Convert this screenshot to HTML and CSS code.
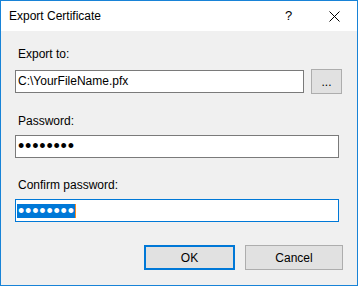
FILE: index.html
```html
<!DOCTYPE html>
<html lang="en">
<head>
  <meta charset="UTF-8" />
  <title>Export Certificate</title>
  <link rel="stylesheet" href="styles.css">
</head>
<body>
  <div class="dialog">
    <div class="titlebar">
      <span class="title">Export Certificate</span>
      <span class="help">?</span>
      <span class="close">
        <svg width="11" height="11" viewBox="0 0 11 11"><path d="M0.5 0.5 L10.5 10.5 M10.5 0.5 L0.5 10.5" stroke="#000" stroke-width="1" fill="none"/></svg>
      </span>
    </div>

    <div class="content">
      <div class="label label-first">Export to:</div>
      <div class="row">
        <div class="field field-path">C:\YourFileName.pfx</div>
        <button class="btn btn-browse">...</button>
      </div>

      <div class="label">Password:</div>
      <div class="field field-wide"><span class="dots">••••••••</span></div>

      <div class="label">Confirm password:</div>
      <div class="field field-wide field-focus"><span class="dots selected">••••••••</span><span class="caret"></span></div>

      <div class="actions">
        <button class="btn btn-ok">OK</button>
        <button class="btn btn-cancel">Cancel</button>
      </div>
    </div>
  </div>
</body>
</html>
```

FILE: styles.css
```css
* { box-sizing: border-box; margin: 0; padding: 0; }
body { font-family: 'Liberation Sans', Arial, sans-serif; font-size: 12px; color: #000; background: #f0f0f0; }

.dialog {
  width: 358px;
  height: 286px;
  border: 1px solid #1883d7;
  background: #f0f0f0;
  display: flex;
  flex-direction: column;
}

.titlebar {
  height: 30px;
  background: #fff;
  display: flex;
  align-items: center;
  padding-left: 8px;
}
.title { flex: 1; line-height: 30px; }
.help { width: 7px; margin-right: 37px; font-size: 13px; line-height: 30px; }
.close { width: 11px; height: 11px; margin-right: 17px; display: flex; margin-top: 1px; }

.content { padding: 0 14px; display: flex; flex-direction: column; }

.label { line-height: 16px; padding-left: 3px; margin-top: 19px; }
.label-first { margin-top: 15px; }

.row { display: flex; align-items: center; margin-top: 7px; height: 25px; }

.field {
  height: 23px;
  background: #fff;
  border: 1px solid #7a7a7a;
  padding-left: 2px;
  line-height: 21px;
  white-space: nowrap;
  overflow: hidden;
}
.field-path { width: 289px; }
.field-wide { width: 324px; margin-top: 6px; }
.field-focus { border-color: #0078d7; display: flex; align-items: center; }

.dots { font-size: 18px; letter-spacing: 0.8px; }
.selected {
  display: inline-block;
  height: 14px;
  line-height: 14px;
  background: #0078d7;
  color: #fff;
  padding-left: 1px;
  margin-left: -1px;
}
.caret { display: inline-block; width: 1px; height: 14px; background: #ff8a1c; }

.btn {
  font-family: 'Liberation Sans', Arial, sans-serif;
  font-size: 12px;
  color: #000;
  background: #e1e1e1;
  border: 1px solid #adadad;
  height: 25px;
}
.btn-browse { width: 31px; margin-left: 7px; }

.actions {
  display: flex;
  justify-content: flex-end;
  gap: 10px;
  margin-top: 23px;
}
.btn-ok { width: 91px; border: 2px solid #0078d7; }
.btn-cancel { width: 98px; }
```
